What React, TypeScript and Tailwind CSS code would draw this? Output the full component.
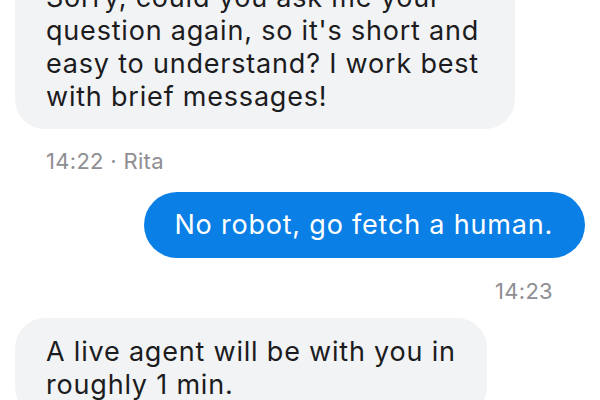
export default function App() {
  return (
    <div
      className="w-[600px] h-[400px] overflow-hidden bg-white text-[#1c1c1e]"
      style={{ fontFamily: "Inter, 'Noto Sans', sans-serif" }}
    >
      <div className="flex flex-col px-[15px] mt-[-36px]">
        <div className="w-[500px] rounded-[30px] bg-[#f2f3f5] pl-[31px] pr-[16px] pt-[17px] pb-[16px] text-[27px] leading-[33px] tracking-[0.8px]">
          Sorry, could you ask me your question again, so it's short and easy to understand? I work best with brief messages!
        </div>
        <div className="mt-[19px] pl-[31px] text-[22px] leading-[26px] tracking-[0.3px] text-[#8e8e93]">14:22 · Rita</div>
        <div className="mt-[18px] self-end rounded-full bg-[#0a7fe5] pl-[30px] pr-[32px] h-[66px] flex items-center text-[27px] tracking-[0.8px] text-white">
          No robot, go fetch a human.
        </div>
        <div className="mt-[20px] self-end mr-[32px] text-[22px] leading-[26px] tracking-[0.3px] text-[#8e8e93]">14:23</div>
        <div className="mt-[14px] w-[472px] rounded-[30px] bg-[#f2f3f5] pl-[31px] pr-[16px] pt-[17px] pb-[16px] text-[27px] leading-[33px] tracking-[0.8px]">
          A live agent will be with you in roughly 1 min.
        </div>
      </div>
    </div>
  );
}
